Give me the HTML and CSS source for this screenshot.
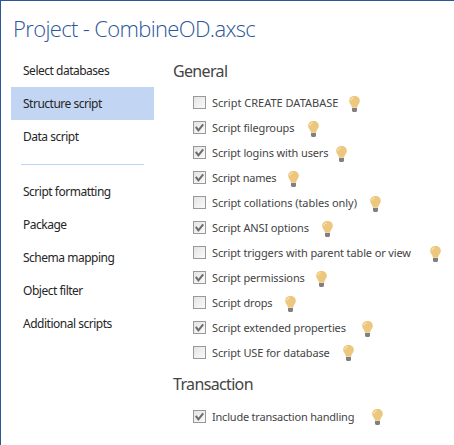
FILE: index.html
```html
<!DOCTYPE html>
<html lang="en">
<head>
  <meta charset="UTF-8">
  <title>Project - CombineOD.axsc</title>
  <meta name="viewport" content="width=device-width, initial-scale=1.0">
  <link rel="stylesheet" href="styles.css">
</head>
<body>
  <!-- Shared icons -->
  <svg class="icon-defs" width="0" height="0">
    <symbol id="bulb" viewBox="0 0 11 16">
      <path d="M5.5 0C2.4 0 .2 2 .2 4.8c0 2 .9 2.8 1.8 4.1.6.9.7 2.1 1.1 2.9h4.8c.4-.8.5-2 1.1-2.9.9-1.3 1.8-2.1 1.8-4.1C10.800 2 8.600 0 5.500 0z" fill="#edc77d"/>
      <path d="M2 4.500C2.100 3 3.100 2 4.600 1.900" fill="none" stroke="#fff3d8" stroke-width="1"/>
      <path d="M3 12h5v3l-1 1H4l-1-1z" fill="#808080"/>
    </symbol>
    <symbol id="tick" viewBox="0 0 9 9">
      <path d="M.8 3.800L3.400 7.300 8.200 1.300" fill="none" stroke="#6b6b6b" stroke-width="2"/>
    </symbol>
  </svg>
  <div class="window">
    <h1 class="title">Project - CombineOD.axsc</h1>
    <div class="columns">
      <nav class="sidebar">
        <a class="nav-item nav-databases">Select databases</a>
        <a class="nav-item active">Structure script</a>
        <a class="nav-item">Data script</a>
        <div class="divider"></div>
        <a class="nav-item">Script formatting</a>
        <a class="nav-item">Package</a>
        <a class="nav-item">Schema mapping</a>
        <a class="nav-item">Object filter</a>
        <a class="nav-item">Additional scripts</a>
      </nav>
      <main class="options">
        <h2 class="heading">General</h2>
        <div class="option"><span class="box"></span><span class="label create">Script CREATE DATABASE</span><svg class="bulb"><use href="#bulb"/></svg></div>
        <div class="option"><span class="box"><svg class="tick"><use href="#tick"/></svg></span><span class="label filegroups">Script filegroups</span><svg class="bulb"><use href="#bulb"/></svg></div>
        <div class="option"><span class="box"><svg class="tick"><use href="#tick"/></svg></span><span class="label logins">Script logins with users</span><svg class="bulb"><use href="#bulb"/></svg></div>
        <div class="option"><span class="box"><svg class="tick"><use href="#tick"/></svg></span><span class="label names">Script names</span><svg class="bulb"><use href="#bulb"/></svg></div>
        <div class="option"><span class="box"></span><span class="label collations">Script collations (tables only)</span><svg class="bulb"><use href="#bulb"/></svg></div>
        <div class="option"><span class="box"><svg class="tick"><use href="#tick"/></svg></span><span class="label ansi">Script ANSI options</span><svg class="bulb"><use href="#bulb"/></svg></div>
        <div class="option"><span class="box"></span><span class="label triggers">Script triggers with parent table or view</span><svg class="bulb"><use href="#bulb"/></svg></div>
        <div class="option"><span class="box"><svg class="tick"><use href="#tick"/></svg></span><span class="label permissions">Script permissions</span><svg class="bulb"><use href="#bulb"/></svg></div>
        <div class="option"><span class="box"></span><span class="label drops">Script drops</span><svg class="bulb"><use href="#bulb"/></svg></div>
        <div class="option"><span class="box"><svg class="tick"><use href="#tick"/></svg></span><span class="label extended">Script extended properties</span><svg class="bulb"><use href="#bulb"/></svg></div>
        <div class="option raised"><span class="box"></span><span class="label use-db">Script USE for database</span><svg class="bulb"><use href="#bulb"/></svg></div>
        <h2 class="heading transaction">Transaction</h2>
        <div class="option raised"><span class="box"><svg class="tick"><use href="#tick"/></svg></span><span class="label handling">Include transaction handling</span><svg class="bulb"><use href="#bulb"/></svg></div>
      </main>
    </div>
  </div>
</body>
</html>
```
FILE: styles.css
```css
* {
  box-sizing: border-box;
}
body {
  margin: 0;
  background: #fff;
  font-family: "Noto Sans", "Open Sans", sans-serif;
  color: #444;
}
.icon-defs {
  display: none;
}
.window {
  height: 445px;
  border-top: 1px solid #2b579a;
  border-left: 1px solid #2b579a;
  overflow: hidden;
}
.title {
  margin: 0;
  padding: 10px 0 0 12px;
  height: 54px;
  font-family: "Open Sans", sans-serif;
  font-size: 22px;
  line-height: 34px;
  font-weight: 300;
  letter-spacing: -0.65px;
  color: #2b579a;
  white-space: nowrap;
}
.columns {
  display: flex;
}
/* Sidebar */
.sidebar {
  width: 143px;
  margin-left: 10px;
  flex-shrink: 0;
}
.nav-item {
  display: block;
  height: 33px;
  padding-left: 12px;
  font-size: 12px;
  letter-spacing: -0.49px;
  line-height: 33px;
  color: #262626;
  white-space: nowrap;
}
.nav-item.active {
  background: #c2d5f2;
}
.nav-databases {
  height: 32px;
  line-height: 32px;
}
.divider {
  height: 1px;
  margin: 11px 10px 10px;
  background: #bdd3f7;
}
/* Options */
.options {
  padding-left: 19px;
}
.heading {
  margin: 0;
  height: 35px;
  font-size: 16px;
  letter-spacing: -0.65px;
  line-height: 32px;
  font-weight: normal;
}
.heading.transaction {
  height: 39px;
  line-height: 38px;
}
.option {
  display: flex;
  align-items: center;
  height: 25px;
  padding-left: 20px;
}
.box {
  width: 13px;
  height: 13px;
  margin-right: 6px;
  flex-shrink: 0;
  border: 1px solid #999;
  background: linear-gradient(135deg, #e4e4e4, #fafafa);
}
.tick {
  display: block;
  width: 9px;
  height: 9px;
  margin: 1px;
}
.label {
  flex-shrink: 0;
  font-size: 11px;
  letter-spacing: -0.13px;
  line-height: 24px;
  white-space: nowrap;
}
.bulb {
  width: 11px;
  height: 16px;
  margin-top: 3px;
}
.raised .bulb {
  margin-top: 0;
}
/* Label columns */
.create { width: 137px; letter-spacing: 0; }
.filegroups { width: 96px; }
.logins { width: 124px; }
.names { width: 76px; letter-spacing: -0.22px; }
.collations { width: 158px; letter-spacing: -0.07px; }
.ansi { width: 110px; }
.triggers { width: 218px; }
.permissions { width: 104px; }
.drops { width: 73px; }
.extended { width: 150px; }
.use-db { width: 131px; }
.handling { width: 160px; letter-spacing: -0.21px; }
```
